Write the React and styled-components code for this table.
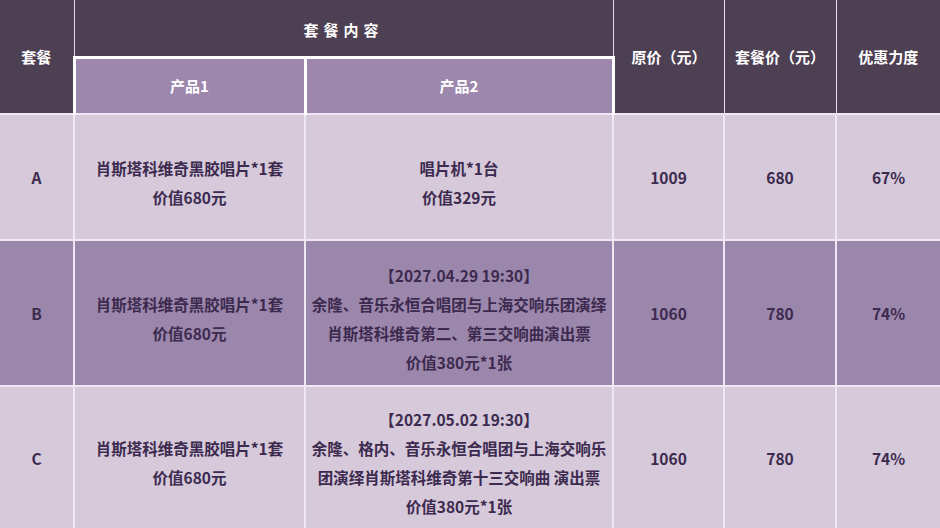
import styled, { createGlobalStyle } from "styled-components";

const GlobalStyle = createGlobalStyle`
  html, body {
    margin: 0;
    padding: 0;
    background: #ffffff;
  }
  body {
    font-family: "Noto Sans CJK SC", "Noto Sans", sans-serif;
  }
`;

const rows = [
  {
    id: "A",
    height: 126,
    tone: "light",
    p1: ["肖斯塔科维奇黑胶唱片*1套", "价值680元"],
    p2: ["唱片机*1台", "价值329元"],
    price: "1009",
    deal: "680",
    off: "67%",
  },
  {
    id: "B",
    height: 146,
    tone: "mid",
    p1: ["肖斯塔科维奇黑胶唱片*1套", "价值680元"],
    p2: [
      "【2027.04.29 19:30】",
      "余隆、音乐永恒合唱团与上海交响乐团演绎",
      "肖斯塔科维奇第二、第三交响曲演出票",
      "价值380元*1张",
    ],
    price: "1060",
    deal: "780",
    off: "74%",
  },
  {
    id: "C",
    height: 142,
    tone: "light",
    p1: ["肖斯塔科维奇黑胶唱片*1套", "价值680元"],
    p2: [
      "【2027.05.02 19:30】",
      "余隆、格内、音乐永恒合唱团与上海交响乐",
      "团演绎肖斯塔科维奇第十三交响曲 演出票",
      "价值380元*1张",
    ],
    price: "1060",
    deal: "780",
    off: "74%",
  },
];

function App() {
  return (
    <>
      <GlobalStyle />
      <Table>
        <colgroup>
          <col style={{ width: 74 }} />
          <col style={{ width: 231 }} />
          <col style={{ width: 308 }} />
          <col style={{ width: 111 }} />
          <col style={{ width: 112 }} />
          <col style={{ width: 104 }} />
        </colgroup>
        <thead>
          <tr>
            <HeadCell rowSpan={2}>套餐</HeadCell>
            <HeadCell colSpan={2} $spaced $h={57}>
              <Raised>套餐内容</Raised>
            </HeadCell>
            <HeadCell rowSpan={2}>原价（元）</HeadCell>
            <HeadCell rowSpan={2}>套餐价（元）</HeadCell>
            <HeadCell rowSpan={2}>优惠力度</HeadCell>
          </tr>
          <tr>
            <SubCell $h={57}>产品1</SubCell>
            <SubCell $h={57}>产品2</SubCell>
          </tr>
        </thead>
        <tbody>
          {rows.map((r) => (
            <tr key={r.id}>
              <Cell $tone={r.tone} $h={r.height}>
                {r.id}
              </Cell>
              <Cell $tone={r.tone}>
                <Stack>
                  {r.p1.map((l, i) => (
                    <Line key={i}>{l}</Line>
                  ))}
                </Stack>
              </Cell>
              <Cell $tone={r.tone}>
                <Stack>
                  {r.p2.map((l, i) => (
                    <Line key={i}>{l}</Line>
                  ))}
                </Stack>
              </Cell>
              <Cell $tone={r.tone}>{r.price}</Cell>
              <Cell $tone={r.tone}>{r.deal}</Cell>
              <Cell $tone={r.tone}>{r.off}</Cell>
            </tr>
          ))}
        </tbody>
      </Table>
    </>
  );
}

const Table = styled.table`
  width: 940px;
  height: 528px;
  table-layout: fixed;
  border-collapse: collapse;
  border-style: hidden;
`;

const HeadCell = styled.th`
  height: ${(p) => (p.$h ? `${p.$h}px` : "auto")};
  padding: 0;
  background: #4e4053;
  color: #ffffff;
  font-size: 15px;
  font-weight: 700;
  letter-spacing: ${(p) => (p.$spaced ? "5px" : "0")};
  text-align: center;
  vertical-align: middle;
  border: 1px solid #e6dceb;
  box-sizing: border-box;
`;

const Raised = styled.div`
  padding-top: 4px;
`;

const SubCell = styled.th`
  height: ${(p) => p.$h}px;
  padding: 0;
  background: #9d87ad;
  color: #ffffff;
  font-size: 15px;
  font-weight: 700;
  text-align: center;
  vertical-align: middle;
  border: 3px solid #ffffff;
  border-bottom-width: 1px;
  border-bottom-color: #e6dceb;
  box-sizing: border-box;
`;

const Cell = styled.td`
  height: ${(p) => (p.$h ? `${p.$h}px` : "auto")};
  padding: 0;
  background: ${(p) => (p.$tone === "mid" ? "#9c87ac" : "#d5c9da")};
  color: #3d2a4f;
  font-size: 15.5px;
  font-weight: 700;
  text-align: center;
  vertical-align: middle;
  border: 2px solid #efe8f2;
  box-sizing: border-box;
`;

const Stack = styled.div`
  padding-top: 11px;
`;

const Line = styled.div`
  line-height: 29px;
  white-space: nowrap;
`;

export default App;
